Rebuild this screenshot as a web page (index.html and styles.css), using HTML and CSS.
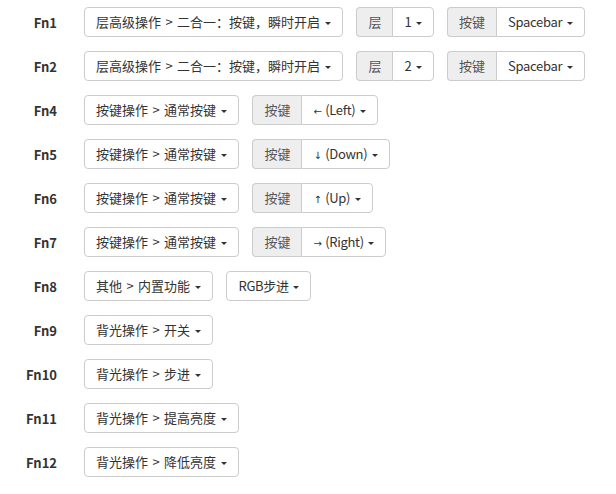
FILE: index.html
```html
<!DOCTYPE html>
<html lang="zh-CN">
<head>
<meta charset="utf-8">
<title>Fn</title>
<link rel="stylesheet" href="styles.css">
</head>
<body>
<div class="form">
  <div class="row">
    <div class="lbl">Fn1</div>
    <div class="controls">
      <button class="btn">层高级操作 &gt; 二合一：按键，瞬时开启 <span class="caret"></span></button>
      <div class="group"><span class="addon">层</span><button class="btn btn-key">1 <span class="caret"></span></button></div>
      <div class="group"><span class="addon">按键</span><button class="btn btn-key">Spacebar <span class="caret"></span></button></div>
    </div>
  </div>
  <div class="row">
    <div class="lbl">Fn2</div>
    <div class="controls">
      <button class="btn">层高级操作 &gt; 二合一：按键，瞬时开启 <span class="caret"></span></button>
      <div class="group"><span class="addon">层</span><button class="btn btn-key">2 <span class="caret"></span></button></div>
      <div class="group"><span class="addon">按键</span><button class="btn btn-key">Spacebar <span class="caret"></span></button></div>
    </div>
  </div>
  <div class="row">
    <div class="lbl">Fn4</div>
    <div class="controls">
      <button class="btn">按键操作 &gt; 通常按键 <span class="caret"></span></button>
      <div class="group"><span class="addon">按键</span><button class="btn btn-key"><span class="arrow">←</span> (Left) <span class="caret"></span></button></div>
    </div>
  </div>
  <div class="row">
    <div class="lbl">Fn5</div>
    <div class="controls">
      <button class="btn">按键操作 &gt; 通常按键 <span class="caret"></span></button>
      <div class="group"><span class="addon">按键</span><button class="btn btn-key"><span class="arrow">↓</span> (Down) <span class="caret"></span></button></div>
    </div>
  </div>
  <div class="row">
    <div class="lbl">Fn6</div>
    <div class="controls">
      <button class="btn">按键操作 &gt; 通常按键 <span class="caret"></span></button>
      <div class="group"><span class="addon">按键</span><button class="btn btn-key"><span class="arrow">↑</span> (Up) <span class="caret"></span></button></div>
    </div>
  </div>
  <div class="row">
    <div class="lbl">Fn7</div>
    <div class="controls">
      <button class="btn">按键操作 &gt; 通常按键 <span class="caret"></span></button>
      <div class="group"><span class="addon">按键</span><button class="btn btn-key"><span class="arrow">→</span> (Right) <span class="caret"></span></button></div>
    </div>
  </div>
  <div class="row">
    <div class="lbl">Fn8</div>
    <div class="controls">
      <button class="btn">其他 &gt; 内置功能 <span class="caret"></span></button>
      <button class="btn btn-key">RGB步进 <span class="caret"></span></button>
    </div>
  </div>
  <div class="row">
    <div class="lbl">Fn9</div>
    <div class="controls">
      <button class="btn">背光操作 &gt; 开关 <span class="caret"></span></button>
    </div>
  </div>
  <div class="row">
    <div class="lbl">Fn10</div>
    <div class="controls">
      <button class="btn">背光操作 &gt; 步进 <span class="caret"></span></button>
    </div>
  </div>
  <div class="row">
    <div class="lbl">Fn11</div>
    <div class="controls">
      <button class="btn">背光操作 &gt; 提高亮度 <span class="caret"></span></button>
    </div>
  </div>
  <div class="row">
    <div class="lbl">Fn12</div>
    <div class="controls">
      <button class="btn">背光操作 &gt; 降低亮度 <span class="caret"></span></button>
    </div>
  </div>
</div>
</body>
</html>
```
FILE: styles.css
```css
* { box-sizing: border-box; }
body {
  margin: 0;
  padding: 7px 0 0;
  background: #fff;
  color: #333;
  font-family: "Noto Sans CJK SC", sans-serif;
  font-size: 13px;
}
.form {
  display: flex;
  flex-direction: column;
  gap: 14px;
}
.row {
  display: grid;
  grid-template-columns: 57px auto;
  column-gap: 27px;
  align-items: center;
  height: 30px;
}
.lbl {
  text-align: right;
  font-weight: bold;
  color: #333;
}
.controls {
  display: flex;
  gap: 13px;
}
.btn {
  font: inherit;
  height: 30px;
  padding: 0 11px;
  border: 1px solid #ccc;
  border-radius: 4px;
  background: #fff;
  color: #333;
  display: inline-block;
  line-height: 28px;
  white-space: pre;
  word-spacing: 1.5px;
}
.btn-key {
  word-spacing: 1px;
  letter-spacing: -0.3px;
}
.caret {
  display: inline-block;
  width: 0;
  height: 0;
  margin-left: 1px;
  vertical-align: middle;
  border-top: 3px solid #333;
  border-left: 3px solid transparent;
  border-right: 3px solid transparent;
}
.group {
  display: flex;
}
.addon {
  height: 30px;
  padding: 0 11px;
  line-height: 28px;
  background: #eee;
  color: #555;
  border: 1px solid #ccc;
  border-right: 0;
  border-radius: 4px 0 0 4px;
}
.group .btn {
  border-radius: 0 4px 4px 0;
}
.arrow {
  font-family: "DejaVu Sans", sans-serif;
  font-size: 10px;
}
```
